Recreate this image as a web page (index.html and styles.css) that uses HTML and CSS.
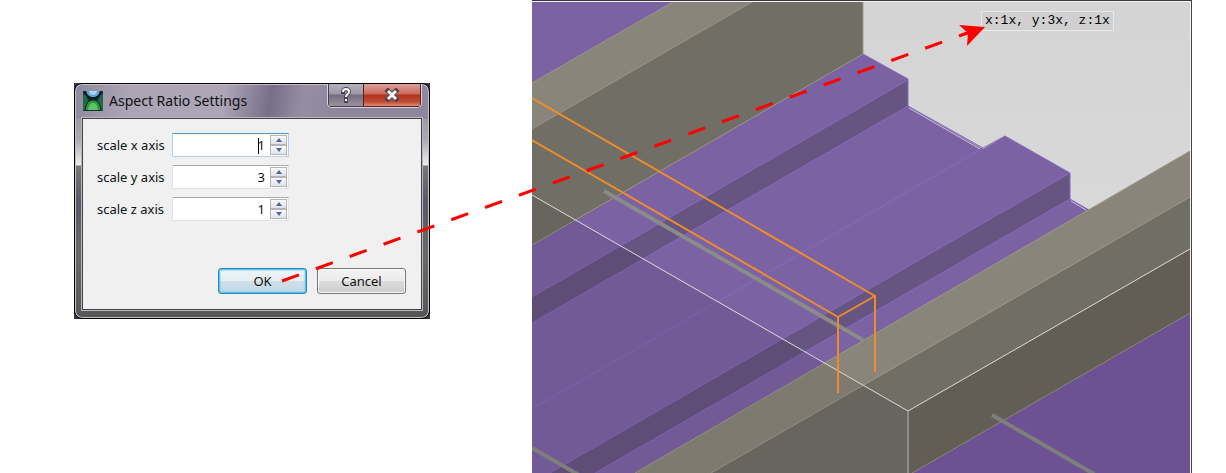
FILE: index.html
```html
<!DOCTYPE html>
<html lang="en">

<head>
    <meta charset="UTF-8">
    <meta name="viewport" content="width=device-width, initial-scale=1.0">
    <title>Aspect Ratio Settings</title>
    <link rel="stylesheet" href="styles.css">
</head>

<body>
    <main class="page">
        <div class="dialog-shell">
            <form class="dialog">
                <header class="titlebar">
                    <svg class="app-icon" viewBox="0 0 20 20" aria-hidden="true">
                        <rect width="20" height="20" rx="1" fill="#14302a" />
                        <path d="M0 3c3 1 5 4 5 8l-2 8H0zM20 3c-3 1-5 4-5 8l2 8h3z" fill="#1f6a4c" />
                        <path d="M3 0h14c-1 4-3 6-7 6S4 4 3 0z" fill="#5fa6dc" />
                        <path d="M6 0h8c-1 3-2 4-4 4S7 3 6 0z" fill="#a9d6f5" />
                        <path d="M1 0h2c1 4 3 6 7 6s6-2 7-6h2c-1 5-4 8-9 8S2 5 1 0z" fill="#0a1a20" />
                        <path d="M2 19c1-6 3-10 8-10s7 4 8 10z" fill="#2f9448" />
                        <path d="M5 19c1-5 2-7 5-7s4 2 5 7z" fill="#5cc465" />
                        <path d="M2 19c1-6 3-10 8-10s7 4 8 10" fill="none" stroke="#0c2418" />
                    </svg>
                    <h1 class="title">Aspect Ratio Settings</h1>
                    <div class="caption-buttons">
                        <button type="button" class="caption help" aria-label="Help">
                            <svg width="14" height="16" viewBox="0 0 14 16">
                                <path class="glyph-edge" d="M4 5c0-4 6-4 6 0 0 2-3 2-3 5M7 12v2" />
                                <path class="glyph" d="M4 5c0-4 6-4 6 0 0 2-3 2-3 5M7 12v2" />
                            </svg>
                        </button>
                        <button type="button" class="caption close" aria-label="Close">
                            <svg width="16" height="14" viewBox="0 0 16 14">
                                <path class="glyph-edge" d="M4 3l8 8M12 3l-8 8" />
                                <path class="glyph" d="M4 3l8 8M12 3l-8 8" />
                            </svg>
                        </button>
                    </div>
                </header>
                <div class="client">
                    <div class="fields">
                        <label for="scaleX">scale x axis</label>
                        <div class="spinbox active">
                            <input type="text" id="scaleX" value="1">
                            <span class="caret"></span>
                            <div class="steps">
                                <button type="button" class="step up" aria-label="Increase x"></button>
                                <button type="button" class="step down" aria-label="Decrease x"></button>
                            </div>
                        </div>
                        <label for="scaleY">scale y axis</label>
                        <div class="spinbox">
                            <input type="text" id="scaleY" value="3">
                            <div class="steps">
                                <button type="button" class="step up" aria-label="Increase y"></button>
                                <button type="button" class="step down" aria-label="Decrease y"></button>
                            </div>
                        </div>
                        <label for="scaleZ">scale z axis</label>
                        <div class="spinbox">
                            <input type="text" id="scaleZ" value="1">
                            <div class="steps">
                                <button type="button" class="step up" aria-label="Increase z"></button>
                                <button type="button" class="step down" aria-label="Decrease z"></button>
                            </div>
                        </div>
                    </div>
                    <div class="actions">
                        <button type="button" class="btn default">OK</button>
                        <button type="button" class="btn">Cancel</button>
                    </div>
                </div>
            </form>
        </div>

        <section class="viewport">
            <svg class="scene" viewBox="532 2 658 471" preserveAspectRatio="xMinYMin slice" aria-hidden="true">
                <defs>
                    <linearGradient id="sky" x1="0" y1="0" x2="0" y2="1">
                        <stop offset="0" stop-color="#d4d4d4" />
                        <stop offset="1" stop-color="#dedede" />
                    </linearGradient>
                </defs>
                <rect x="532" y="2" width="658" height="471" fill="url(#sky)" />

                <!-- floor with its two ridges -->
                <path fill="#7b62a3" d="M532 2H863V54L908 79V106L983 149L1005 136L1070 173V199L1089 210L635 473H532z" />
                <path fill="#665481" d="M908 80V106L532 323V297zM1070 173V199L595 473H550z" />
                <path class="ridge" d="M863 54L908 79V106M532 297L908 80M532 323L908 106L983 148" />
                <path class="ridge" d="M532 409L983 148" />
                <path class="ridge" d="M983 148L1005 136L1070 173V199L1089 210M550 473L1070 173M595 473L1070 199" />
                <path stroke="#c9c3d4" d="M909 108L980 149M1071 201L1086 210" />

                <!-- back wall -->
                <path fill="#89857a" d="M532 83L673 2H752L532 129z" />
                <path fill="#706e65" d="M532 129L752 2H863V54L532 245z" />
                <path class="wall-edge" d="M532 83L673 2M532 129L752 2M863 2V54L532 245" />

                <path class="rod" d="M604 191L863 340" />

                <!-- front wall -->
                <path fill="#89857a" d="M1190 151V197L711 473H635z" />
                <path fill="#706e65" d="M1190 197V313L912 473H711z" />
                <path class="wall-edge" d="M635 473L1190 151M711 473L1190 197" />

                <!-- section planes -->
                <path fill="#000" opacity=".08" d="M532 195L908 411V473H532z" />
                <path fill="#625e55" d="M908 411L1190 249V313L912 473H908z" />
                <path fill="#6c5293" d="M1190 313V473H912z" />
                <path stroke="#8a8272" d="M912 473L1190 313" />
                <path class="rod shade" d="M532 448L579 475M992 415L1094 474" />
                <path class="outline" d="M532 195L908 411L1190 249" />
                <path stroke="#b8b8b8" d="M908 411V473" />

                <path class="probe" d="M532 98L875 296V372M532 140L838 317V393M838 317L875 296" />
            </svg>
            <output class="ratio">x:1x, y:3x, z:1x</output>
        </section>

        <svg class="pointer" width="1226" height="473" viewBox="0 0 1226 473" aria-hidden="true">
            <path d="M282 281L970 32" fill="none" stroke="#f00" stroke-width="3" stroke-dasharray="18 18" />
            <path d="M985 27L959 25L968 33L967 46z" fill="#f00" />
        </svg>
    </main>
</body>

</html>
```
FILE: styles.css
```css
* {
    box-sizing: border-box;
}

body {
    margin: 0;
    background-color: #fff;
    color: #111;
    font-family: "Noto Sans", "Open Sans", sans-serif;
    font-size: 13px;
}

.page {
    position: relative;
    display: flex;
    align-items: flex-start;
    gap: 102px;
    min-height: 100vh;
    padding: 0 34px 0 74px;
    overflow: hidden;
}

/* Dialog */
.dialog-shell {
    flex: 0 0 356px;
    margin-top: 83px;
    background-color: #3a3048;
}

.dialog {
    padding: 0 7px 8px;
    border: 1px solid #000;
    border-radius: 8px;
    background:
        linear-gradient(100deg, #8e889b, #aaa4b5 15%, #aca6b7 42%, #776e88 55%, #958ea3 64%, #8d869c 75%, #8d869c) 0 0 / 100% 35px no-repeat,
        linear-gradient(#8b8498, #aaa8b0 55px, #eee 81px, #777 82px, #5c5666 120px, #6a6a6a 170px, #555);
    box-shadow: inset 0 0 0 1px #c4c1ca;
}

.titlebar {
    display: flex;
    align-items: center;
    height: 34px;
    padding-left: 1px;
}

.app-icon {
    width: 20px;
    height: 20px;
}

.title {
    flex: 1;
    margin: 0 0 0 6px;
    font-size: 14px;
    line-height: 20px;
    font-weight: normal;
}

.caption-buttons {
    display: flex;
    align-self: flex-start;
    height: 24px;
    border: 1px solid #d8d4df;
    border-top: 0;
    border-radius: 0 0 5px 5px;
    overflow: hidden;
}

.caption {
    display: flex;
    align-items: center;
    justify-content: center;
    padding: 0;
    border: 1px solid #443d50;
    border-top: 0;
}

.help {
    width: 35px;
    border-right: 0;
    background: linear-gradient(#b5b0bd, #9d97a7 45%, #756d82 50%, #999199);
}

.close {
    width: 58px;
    border-color: #54221f;
    background: linear-gradient(#dba197, #cb6b5b 45%, #b2311f 50%, #bf4b31 80%, #dc8a70);
}

.glyph,
.glyph-edge {
    fill: none;
    stroke: #fff;
    stroke-width: 2;
}

.glyph-edge {
    stroke: #4b4352;
    stroke-width: 4;
    stroke-linecap: square;
}

.close .glyph {
    stroke-width: 3;
}

.close .glyph-edge {
    stroke-width: 5;
}

.client {
    display: flex;
    flex-direction: column;
    justify-content: space-between;
    min-height: 192px;
    padding: 14px 15px 15px;
    border: 1px solid #45424a;
    outline: 1px solid #b9b7bd;
    background-color: #f0f0f0;
}

.fields {
    display: grid;
    grid-template-columns: 67px 117px;
    align-items: center;
    gap: 8px;
    margin-left: -1px;
}

.fields label {
    white-space: nowrap;
}

.spinbox {
    position: relative;
    display: flex;
    height: 24px;
    padding: 1px;
    border: 1px solid #e2e3ea;
    border-top-color: #abadb3;
    background-color: #fff;
}

.spinbox.active {
    border-color: #b5cfe7;
    border-top-color: #5794bf;
}

.spinbox input {
    flex: 1;
    min-width: 0;
    padding: 0 5px 0 0;
    border: 0;
    outline: 0;
    background: none;
    color: #111;
    font: inherit;
    text-align: right;
}

.caret {
    position: absolute;
    top: 4px;
    right: 29px;
    width: 1px;
    height: 16px;
    background-color: #000;
}

.steps {
    display: flex;
    flex-direction: column;
    width: 17px;
}

.step {
    display: flex;
    flex: 1;
    align-items: center;
    justify-content: center;
    padding: 0;
    border: 1px solid #b4b4bb;
    background: linear-gradient(#fafafa, #e3e3e6);
}

.step::before {
    content: "";
    border: 3px solid transparent;
}

.up::before {
    border-top: 0;
    border-bottom: 4px solid #4965b3;
}

.down::before {
    border-bottom: 0;
    border-top: 4px solid #4965b3;
}

.actions {
    display: flex;
    justify-content: flex-end;
    gap: 10px;
}

.btn {
    width: 89px;
    height: 26px;
    padding: 0;
    border: 1px solid #777;
    border-radius: 3px;
    background: linear-gradient(#f3f3f3, #ebebeb 49%, #dcdcdc 50%, #cdcdcd);
    box-shadow: inset 0 0 0 1px #fafafa;
    color: #111;
    font: inherit;
}

.btn.default {
    border-color: #3c7fb1;
    background: linear-gradient(#eef5f8, #e3eef3 49%, #cfdfe8 50%, #c3d8e4);
    box-shadow: inset 0 0 0 1px #48cbf3, inset 0 0 2px 1px #48cbf3;
}

/* 3D view */
.viewport {
    position: relative;
    flex: 1;
    min-width: 0;
    height: 100vh;
    border-top: 1px solid #3b3741;
    border-right: 1px solid #444;
}

.scene {
    display: block;
    width: 100%;
    height: 100%;
    border-top: 1px solid #f4f4f4;
    border-right: 1px solid #f4f4f4;
}

.scene path {
    stroke-linejoin: round;
}

.ridge,
.wall-edge,
.rod,
.outline,
.probe {
    fill: none;
}

.ridge {
    stroke: #8869bf;
}

.wall-edge {
    stroke: #9e9784;
}

.rod {
    stroke: #8b8b89;
    stroke-width: 4;
}

.rod.shade {
    stroke: #7e7e7c;
}

.outline {
    stroke: #dcdcdc;
}

.probe {
    stroke: #ee8c2b;
    stroke-width: 2;
}

.ratio {
    position: absolute;
    top: 10px;
    left: 449px;
    padding: 0 3px;
    border: 1px solid #e8e8e8;
    background-color: #d0d0d0;
    color: #000;
    font-family: "Liberation Mono", monospace;
    font-size: 13px;
    line-height: 18px;
    white-space: nowrap;
}

/* Callout arrow over both parts */
.pointer {
    position: absolute;
    top: 0;
    left: 0;
    pointer-events: none;
}
```
